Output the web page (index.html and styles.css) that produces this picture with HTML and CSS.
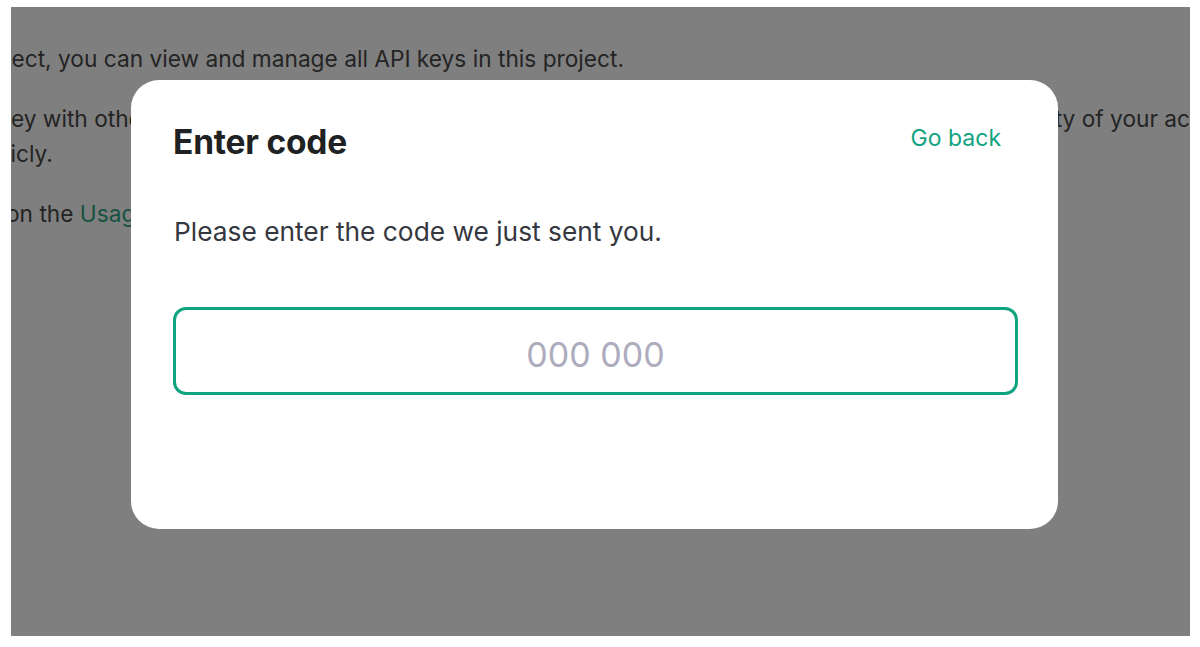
FILE: index.html
```html
<!DOCTYPE html>
<html lang="en">
<head>
<meta charset="utf-8">
<title>API keys – Enter code</title>
<link rel="stylesheet" href="styles.css">
</head>
<body>
  <div class="screen">
    <main class="page">
      <p class="copy copy-owner">ject, you can view and manage all API keys in this project.</p>
      <p class="copy copy-share">key with others, or expose it in the browser or other client-side code. <span class="copy-mid">In order to protect the securi</span>ty of your account, OpenAI may also automatically disable</p>
      <p class="copy copy-leak">licly.</p>
      <p class="copy copy-usage">on the <a class="link" href="#">Usage</a> page.</p>
    </main>

    <div class="backdrop"></div>

    <section class="modal" role="dialog" aria-labelledby="code-title">
      <header class="modal-head">
        <h2 id="code-title" class="modal-title">Enter code</h2>
        <a class="back-link" href="#">Go back</a>
      </header>
      <p class="modal-text">Please enter the code we just sent you.</p>
      <input class="code-input" type="text" inputmode="numeric" placeholder="000 000">
    </section>
  </div>
</body>
</html>
```

FILE: styles.css
```css
* {
  box-sizing: border-box;
}

html, body {
  margin: 0;
  background: #ffffff;
}

body {
  font-family: "Inter", "Noto Sans", sans-serif;
  padding: 7px 10px 11px 11px;
}

/* browser viewport with the dimmed page behind the dialog */
.screen {
  position: relative;
  width: 1179px;
  height: 629px;
  overflow: hidden;
  background: #ffffff;
}

.page {
  padding-top: 34px;
  color: #484848;
}

.copy {
  margin: 0 0 25px;
  font-size: 22.7px;
  line-height: 35px;
  white-space: nowrap;
}

.copy-owner { margin-left: -5px; }
.copy-share { margin-left: -12px; margin-bottom: 0; }
.copy-leak { margin-left: -6px; }
.copy-usage { margin-left: -5px; }

.copy-mid {
  word-spacing: 1px;
}

.link {
  color: #2ea57f;
  text-decoration: none;
}

.backdrop {
  position: absolute;
  inset: 0;
  background: rgba(0, 0, 0, 0.5);
}

/* dialog */
.modal {
  position: absolute;
  left: 120px;
  top: 73px;
  width: 927px;
  height: 449px;
  padding: 42px 42px 0 42px;
  background: #ffffff;
  border-radius: 28px;
}

.modal-head {
  display: flex;
  align-items: center;
  justify-content: space-between;
  height: 40px;
}

.modal-title {
  margin: 0;
  font-size: 33.5px;
  font-weight: 700;
  color: #202123;
  letter-spacing: -0.2px;
}

.back-link {
  margin-right: 15px;
  margin-top: -8px;
  font-size: 23px;
  color: #10a37f;
  text-decoration: none;
}

.modal-text {
  margin: 54px 0 0 1px;
  font-size: 26.3px;
  line-height: 32px;
  color: #353740;
}

.code-input {
  display: block;
  width: 845px;
  height: 88px;
  margin-top: 59px;
  padding: 6px 0 0;
  border: 3px solid #10a37f;
  border-radius: 13px;
  background: #ffffff;
  font-family: inherit;
  font-size: 34px;
  text-align: center;
  color: #202123;
  outline: none;
}

.code-input::placeholder {
  color: #acacbe;
}
```
